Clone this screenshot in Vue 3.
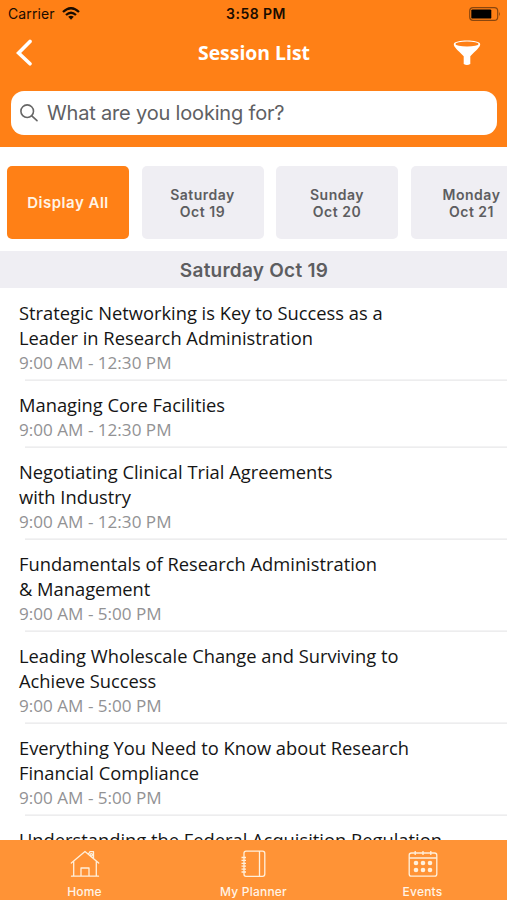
<script setup>
const days = [
  { lines: ['Display All'], active: true },
  { lines: ['Saturday', 'Oct 19'] },
  { lines: ['Sunday', 'Oct 20'] },
  { lines: ['Monday', 'Oct 21'] },
]
const sessions = [
  { title: ['Strategic Networking is Key to Success as a', 'Leader in Research Administration'], time: '9:00 AM - 12:30 PM' },
  { title: ['Managing Core Facilities'], time: '9:00 AM - 12:30 PM' },
  { title: ['Negotiating Clinical Trial Agreements', 'with Industry'], time: '9:00 AM - 12:30 PM' },
  { title: ['Fundamentals of Research Administration', '& Management'], time: '9:00 AM - 5:00 PM' },
  { title: ['Leading Wholescale Change and Surviving to', 'Achieve Success'], time: '9:00 AM - 5:00 PM' },
  { title: ['Everything You Need to Know about Research', 'Financial Compliance'], time: '9:00 AM - 5:00 PM' },
  { title: ['Understanding the Federal Acquisition Regulation'], time: '' },
]
</script>

<template>
  <div class="screen">
    <header class="top">
      <div class="status">
        <div class="carrier">
          <span>Carrier</span>
          <svg width="18" height="13" viewBox="0 0 18 13">
            <g fill="none" stroke="#1a0c00" stroke-width="2.3">
              <path d="M1 5 Q9 -2.6 17 5" />
              <path d="M4 8 Q9 3.4 14 8" />
            </g>
            <path d="M6.2 9.8 Q9 7.5 11.8 9.8 L9 12.7 Z" fill="#1a0c00" />
          </svg>
        </div>
        <span class="clock">3:58 PM</span>
        <svg class="battery" width="32" height="14" viewBox="0 0 32 14">
          <rect x="0.7" y="0.7" width="28" height="12.6" rx="3.4" fill="none" stroke="#8a460e" stroke-width="1.2" />
          <rect x="2.3" y="2.4" width="20" height="9.2" rx="1.2" fill="#000" />
          <path d="M30 4.8 Q31.8 7 30 9.2 Z" fill="#8a460e" />
        </svg>
      </div>
      <div class="nav">
        <svg width="18" height="28" viewBox="0 0 18 28">
          <path d="M16 2.4 L4.6 14 L16 24.8" fill="none" stroke="#fff" stroke-width="3.6" stroke-linecap="round" stroke-linejoin="miter" />
        </svg>
        <h1>Session List</h1>
        <svg width="28" height="28" viewBox="0 0 28 28">
          <path d="M.8 5.2 C.8 .3 27.2 .3 27.2 5.2 C27.2 8 23.5 10.8 17.3 17.2 L17.3 25 Q14 27 10.7 25 L10.7 17.2 C4.5 10.8 .8 8 .8 5.2Z" fill="#fff" />
          <ellipse cx="14" cy="4.9" rx="11.6" ry="2.5" fill="#ff8016" />
        </svg>
      </div>
      <div class="search">
        <svg width="19" height="19" viewBox="0 0 19 19" fill="none" stroke="#666" stroke-width="1.6" stroke-linecap="round">
          <circle cx="7.2" cy="7.2" r="6.3" />
          <path d="M11.8 11.8 L17 16.7" />
        </svg>
        <span>What are you looking for?</span>
      </div>
    </header>
    <div class="days">
      <div v-for="d in days" :key="d.lines[0]" class="day" :class="{ active: d.active }">
        <span v-for="l in d.lines" :key="l">{{ l }}</span>
      </div>
    </div>
    <h2 class="section"><span>Saturday Oct 19</span></h2>
    <main class="list">
      <article v-for="s in sessions" :key="s.title[0]" class="row">
        <div v-for="t in s.title" :key="t" class="title">{{ t }}</div>
        <div v-if="s.time" class="time">{{ s.time }}</div>
      </article>
    </main>
    <footer class="tabs">
      <div class="tab">
        <svg width="30" height="28" viewBox="0 0 30 28" fill="none" stroke="#fff0dc" stroke-width="1.3" stroke-linejoin="round" stroke-linecap="round">
          <path d="M1.3 13 L15 1.4 L28.7 13 M3.7 11.5 V26.2 M26.3 11.5 V26.2 M1.5 26.2 H28.5 M11 26 V18 H19 V26 M18.5 4 L20 1.6 H23.5 V8.4" />
          <circle cx="21.3" cy="4.8" r="1.2" />
        </svg>
        <span>Home</span>
      </div>
      <div class="tab">
        <svg width="30" height="28" viewBox="0 0 30 28" fill="none" stroke="#fff0dc" stroke-width="1.3" stroke-linejoin="round">
          <path d="M5 4.8 V3.2 Q5 1.2 7 1.2 H23.5 Q25.8 1.2 25.8 3.4 V24 Q25.8 26.3 23.5 26.3 H7 Q5 26.3 5 24.3 V4.8 M20.5 1.2 V26.3 M2.5 7.5 H7 M2.5 10.4 H7 M2.5 13.3 H7 M2.5 16.2 H7 M2.5 19.1 H7 M2.5 22 H7" />
        </svg>
        <span>My Planner</span>
      </div>
      <div class="tab">
        <svg width="30" height="28" viewBox="0 0 30 28" fill="none" stroke="#fff0dc" stroke-width="1.3">
          <rect x="1.2" y="3" width="27.6" height="23.2" rx="2.2" />
          <path d="M1.2 8 H28.8 M7.2 1 V5 M15 1 V5 M22.8 1 V5" />
          <g fill="#fff0dc" stroke="none">
            <circle v-for="i in 6" :key="i" :cx="8 + ((i - 1) % 3) * 7" :cy="i > 3 ? 20 : 13" r="2.3" />
          </g>
        </svg>
        <span>Events</span>
      </div>
    </footer>
  </div>
</template>

<style>
body { margin: 0; overflow: hidden; background: #fff; }
</style>

<style scoped>
.screen { width: 507px; height: 900px; display: flex; flex-direction: column; overflow: hidden; background: #fff; font-family: Inter, sans-serif; }
.top { height: 147px; flex: none; background: #ff8016; box-sizing: border-box; }
.status { height: 27px; display: grid; grid-template-columns: 1fr auto 1fr; align-items: center; padding: 0 6px 0 8px; color: #1a0c00; font-size: 14px; box-sizing: border-box; }
.carrier { display: flex; align-items: center; gap: 7px; letter-spacing: 0.1px; }
.clock { font-weight: 600; font-size: 14px; letter-spacing: 0.45px; padding-left: 3px; }
.battery { justify-self: end; }
.nav { height: 52px; display: grid; grid-template-columns: 28px 1fr 28px; align-items: center; padding: 0 26px 0 14px; color: #fff; }
h1 { margin: 0; padding-left: 13px; text-align: center; font: 700 19.4px/26px "Open Sans", sans-serif; }
.search { display: flex; align-items: center; gap: 8px; height: 44px; margin: 12px 10px 0 11px; padding-left: 9px; box-sizing: border-box; border-radius: 13px; background: #fff; color: #606063; font-size: 20px; letter-spacing: -0.18px; }
.days { display: flex; gap: 12.5px; padding: 19px 0 12px 7px; flex: none; overflow: hidden; }
.day { flex: none; width: 122px; height: 73px; border-radius: 5px; background: #efeef3; color: #5d5d60; display: flex; flex-direction: column; align-items: center; justify-content: center; font-size: 14px; line-height: 17px; font-weight: 600; letter-spacing: 0.5px; }
.active { background: #ff8016; color: #fff4e6; font-size: 15px; }
.section { margin: 0; height: 37px; flex: none; background: #efeef3; color: #5d5d60; text-align: center; font-size: 19px; line-height: 39px; font-weight: 600; letter-spacing: 0.25px; padding-left: 1px; }
.list { flex: 1; min-height: 0; overflow: hidden; padding-top: 1px; }
.row { padding: 11px 0 0 19px; height: 67px; box-sizing: border-box; background: linear-gradient(#f3f3f4 50%, #ededee 50%) 25px 100% / 100% 2px no-repeat; }
.row:has(.title + .title) { height: 92px; }
.title { font: 400 18.32px/25px "Open Sans", sans-serif; color: #151515; white-space: nowrap; }
.time { font: 400 17.1px/25px "Open Sans", sans-serif; color: #929294; white-space: nowrap; }
.tabs { height: 60px; flex: none; display: grid; grid-template-columns: repeat(3, 1fr); background: #ff9336; color: #fff4e6; }
.tab { display: flex; flex-direction: column; align-items: center; padding-top: 10px; gap: 5px; box-sizing: border-box; font-size: 12px; line-height: 17px; font-weight: 500; letter-spacing: 0.2px; }
</style>
